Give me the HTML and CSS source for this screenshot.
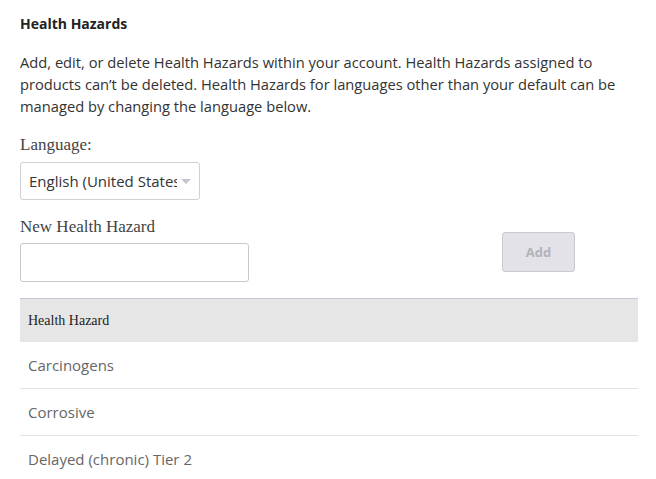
FILE: index.html
```html
<!DOCTYPE html>
<html>
<head>
<meta charset="utf-8">
<link rel="stylesheet" href="styles.css">
</head>
<body>
<div class="page">
  <h1 class="title">Health Hazards</h1>
  <p class="intro">Add, edit, or delete Health Hazards within your account. Health Hazards assigned to products can’t be deleted. Health Hazards for languages other than your default can be managed by changing the language below.</p>
  <label class="label lang-label">Language:</label>
  <div class="select">
    <span class="select-text">English (United States)</span>
    <span class="caret"></span>
  </div>
  <div class="new-row">
    <div class="new-field">
      <label class="label">New Health Hazard</label>
      <div class="input"></div>
    </div>
    <button class="add-btn">Add</button>
  </div>
  <div class="table">
    <div class="thead">Health Hazard</div>
    <div class="row">Carcinogens</div>
    <div class="row">Corrosive</div>
    <div class="row last">Delayed (chronic) Tier 2</div>
  </div>
</div>
</body>
</html>
```
FILE: styles.css
```css
html, body {
  margin: 0;
  padding: 0;
  background: #ffffff;
}
.page {
  padding: 14px 18px 0 20px;
  font-family: "Open Sans", "Noto Sans", sans-serif;
  color: #333333;
}
.title {
  margin: 0;
  font-size: 14px;
  font-weight: 700;
  line-height: 20px;
  color: #222222;
}
.intro {
  margin: 17px 0 0 0;
  font-size: 14.7px;
  line-height: 22px;
  color: #333333;
}
.label {
  display: block;
  font-family: "Liberation Serif", serif;
  font-size: 17px;
  line-height: 22px;
  color: #444444;
}
.lang-label {
  margin-top: 17px;
}
.select {
  margin-top: 6px;
  width: 180px;
  height: 38px;
  box-sizing: border-box;
  border: 1px solid #cfcfd6;
  border-radius: 3px;
  display: flex;
  align-items: center;
  padding: 0 8px 0 8px;
  gap: 4px;
}
.select-text {
  flex: 1;
  overflow: hidden;
  white-space: nowrap;
  font-size: 15px;
  color: #333;
}
.caret {
  width: 0;
  height: 0;
  border-left: 5px solid transparent;
  border-right: 5px solid transparent;
  border-top: 5px solid #c4c4cc;
}
.new-row {
  margin-top: 16px;
  display: flex;
  align-items: flex-start;
}
.new-field {
  width: 229px;
}
.input {
  margin-top: 5px;
  width: 229px;
  height: 39px;
  box-sizing: border-box;
  border: 1px solid #c8c8d0;
  border-radius: 3px;
}
.add-btn {
  margin: 16px 0 0 253px;
  width: 73px;
  height: 40px;
  box-sizing: border-box;
  background: #e2e2e8;
  border: 1px solid #c9c9d1;
  border-radius: 3px;
  font-family: "Open Sans", sans-serif;
  font-weight: 700;
  font-size: 13px;
  color: #b3b3ba;
}
.table {
  margin-top: 16px;
  width: 618px;
  border-top: 1px solid #c7c4da;
}
.thead {
  height: 43px;
  background: #e6e6e6;
  display: flex;
  align-items: center;
  padding-left: 8px;
  font-family: "Liberation Serif", serif;
  font-size: 14px;
  color: #222;
}
.row {
  height: 46px;
  display: flex;
  align-items: center;
  padding-left: 8px;
  font-size: 15px;
  color: #666666;
  border-bottom: 1px solid #e2e2e4;
}
.row.last {
  border-bottom: none;
}
```
